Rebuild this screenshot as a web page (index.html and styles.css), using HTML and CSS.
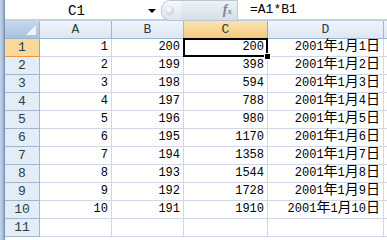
FILE: index.html
```html
<!DOCTYPE html>
<html lang="zh-CN">
<head>
    <meta charset="UTF-8">
    <title>Sheet1</title>
    <link rel="stylesheet" href="styles.css">
</head>
<body>
    <div class="window">
        <div class="frame"></div>
        <div class="main">
            <div class="formula-bar">
                <div class="name-box">
                    <span class="name">C1</span>
                    <span class="arrow"></span>
                </div>
                <div class="grip"><span class="knob"></span></div>
                <div class="fx-area"><span class="fx">f<small>x</small></span></div>
                <div class="formula">=A1*B1</div>
            </div>
            <div class="sheet">
                <div class="hdr corner"><span class="tri"></span></div>
                <div class="hdr col">A</div>
                <div class="hdr col">B</div>
                <div class="hdr col sel">C</div>
                <div class="hdr col">D</div>
                <div class="hdr col rest"></div>
                <div class="hdr row sel">1</div><div class="cell">1</div><div class="cell">200</div><div class="cell active">200</div><div class="cell">2001<span class="cj">年</span>1<span class="cj">月</span>1<span class="cj">日</span></div><div class="cell rest"></div>
                <div class="hdr row">2</div><div class="cell">2</div><div class="cell">199</div><div class="cell">398</div><div class="cell">2001<span class="cj">年</span>1<span class="cj">月</span>2<span class="cj">日</span></div><div class="cell rest"></div>
                <div class="hdr row">3</div><div class="cell">3</div><div class="cell">198</div><div class="cell">594</div><div class="cell">2001<span class="cj">年</span>1<span class="cj">月</span>3<span class="cj">日</span></div><div class="cell rest"></div>
                <div class="hdr row">4</div><div class="cell">4</div><div class="cell">197</div><div class="cell">788</div><div class="cell">2001<span class="cj">年</span>1<span class="cj">月</span>4<span class="cj">日</span></div><div class="cell rest"></div>
                <div class="hdr row">5</div><div class="cell">5</div><div class="cell">196</div><div class="cell">980</div><div class="cell">2001<span class="cj">年</span>1<span class="cj">月</span>5<span class="cj">日</span></div><div class="cell rest"></div>
                <div class="hdr row">6</div><div class="cell">6</div><div class="cell">195</div><div class="cell">1170</div><div class="cell">2001<span class="cj">年</span>1<span class="cj">月</span>6<span class="cj">日</span></div><div class="cell rest"></div>
                <div class="hdr row">7</div><div class="cell">7</div><div class="cell">194</div><div class="cell">1358</div><div class="cell">2001<span class="cj">年</span>1<span class="cj">月</span>7<span class="cj">日</span></div><div class="cell rest"></div>
                <div class="hdr row">8</div><div class="cell">8</div><div class="cell">193</div><div class="cell">1544</div><div class="cell">2001<span class="cj">年</span>1<span class="cj">月</span>8<span class="cj">日</span></div><div class="cell rest"></div>
                <div class="hdr row">9</div><div class="cell">9</div><div class="cell">192</div><div class="cell">1728</div><div class="cell">2001<span class="cj">年</span>1<span class="cj">月</span>9<span class="cj">日</span></div><div class="cell rest"></div>
                <div class="hdr row">10</div><div class="cell">10</div><div class="cell">191</div><div class="cell">1910</div><div class="cell">2001<span class="cj">年</span>1<span class="cj">月</span>10<span class="cj">日</span></div><div class="cell rest"></div>
                <div class="hdr row">11</div><div class="cell"></div><div class="cell"></div><div class="cell"></div><div class="cell"></div><div class="cell rest"></div>
            </div>
        </div>
    </div>
</body>
</html>
```

FILE: styles.css
```css
body {
    margin: 0;
    background-color: #ffffff;
    font-family: "Liberation Mono", "Noto Sans CJK SC", monospace;
    font-size: 12px;
    color: #000000;
    overflow: hidden;
}
.window {
    display: flex;
    height: 240px;
}
.frame {
    width: 5px;
    flex: none;
    background: linear-gradient(to right, #c5d5e8, #a4bbd8 60%, #6d87a8);
}
.main {
    flex: 1;
    min-width: 0;
    display: flex;
    flex-direction: column;
}
.formula-bar {
    display: grid;
    grid-template-columns: 156px 20px 57px 1fr;
    height: 19px;
    border-bottom: 2px solid #c1d0e3;
    background-color: #ffffff;
}
.name-box {
    display: flex;
    align-items: center;
}
.name {
    flex: 1;
    text-align: center;
    font-size: 14px;
}
.arrow {
    width: 0;
    height: 0;
    margin-right: 5px;
    border-left: 4px solid transparent;
    border-right: 4px solid transparent;
    border-top: 4px solid #000000;
}
.grip {
    background: linear-gradient(to bottom, #f7f9fc, #dbe3ec);
    border-radius: 9px 0 0 9px;
    border: 1px solid #b9c7d8;
    border-right: none;
    display: flex;
    align-items: center;
    padding-left: 3px;
    box-sizing: border-box;
}
.knob {
    width: 9px;
    height: 9px;
    border-radius: 50%;
    background: radial-gradient(circle at 40% 35%, #ffffff, #b7c0ca);
}
.fx-area {
    background: linear-gradient(to bottom, #eef2f7, #d6dee8);
    border-top: 1px solid #b9c7d8;
    border-bottom: 1px solid #b9c7d8;
    border-right: 1px solid #b9c7d8;
    box-sizing: border-box;
    text-align: right;
    padding-right: 5px;
    line-height: 17px;
}
.fx {
    font-family: "Liberation Serif", serif;
    font-style: italic;
    font-weight: bold;
    font-size: 14px;
    color: #7d8590;
}
.fx small {
    font-size: 9px;
}
.formula {
    padding-left: 12px;
    line-height: 19px;
    font-size: 13px;
}
.sheet {
    display: grid;
    grid-template-columns: 35px 72px 72px 84px 116px 1fr;
    grid-auto-rows: 18px;
}
.sheet > div {
    box-sizing: border-box;
    border-right: 1px solid #d0d7e5;
    border-bottom: 1px solid #d0d7e5;
    line-height: 17px;
    white-space: nowrap;
}
.sheet > .hdr {
    background: linear-gradient(to bottom, #f0f4fa, #dde6f2);
    border-color: #9eb6ce;
    color: #27413e;
    text-align: center;
    font-size: 13px;
}
.sheet > .hdr.row {
    background: #e4ecf7;
}
.sheet > .hdr.sel {
    background: linear-gradient(to bottom, #fbe3b4, #f6c97a);
    border-color: #f29536;
}
.sheet > .hdr.row.sel {
    background: #f9d99b;
}
.sheet > .corner {
    background: linear-gradient(to bottom, #c6d7ee, #a9c1e2);
    position: relative;
}
.tri {
    position: absolute;
    right: 3px;
    bottom: 3px;
    width: 0;
    height: 0;
    border-left: 10px solid transparent;
    border-bottom: 10px solid #f0f4fa;
}
.cell {
    text-align: right;
    padding-right: 3px;
}
.cj {
    font-family: "Noto Sans CJK SC", sans-serif;
    font-size: 14px;
    line-height: 0;
}
.sheet > .rest {
    border-right: none;
}
.active {
    position: relative;
}
.active::after {
    content: "";
    position: absolute;
    left: -1px;
    top: -1px;
    right: -1px;
    bottom: -1px;
    border: 2px solid #000000;
}
.active::before {
    content: "";
    position: absolute;
    right: -4px;
    bottom: -4px;
    width: 5px;
    height: 5px;
    background: #000000;
    border: 1px solid #ffffff;
    z-index: 1;
}
```
